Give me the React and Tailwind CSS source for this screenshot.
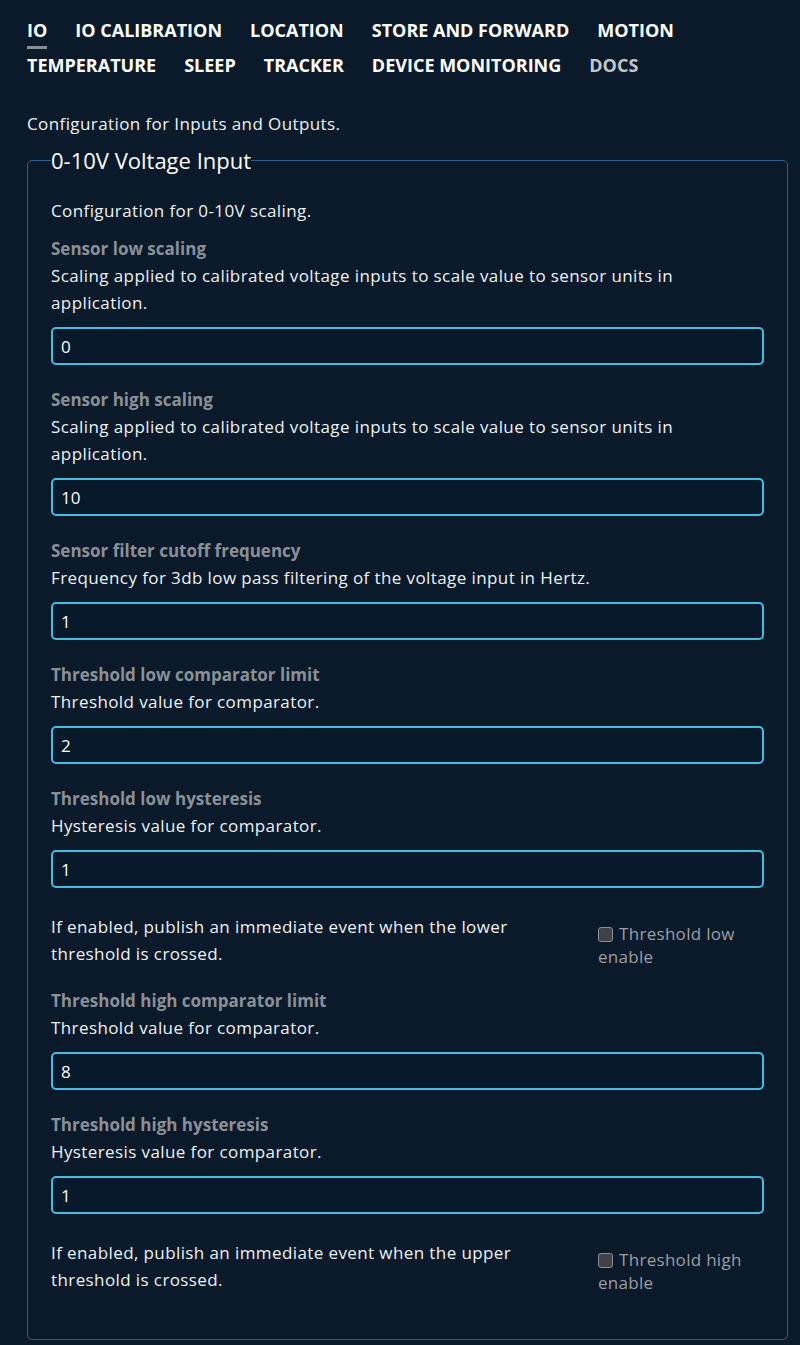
import React from 'react';

const tabs = [
  { name: 'IO', active: true },
  { name: 'IO CALIBRATION' },
  { name: 'LOCATION' },
  { name: 'STORE AND FORWARD' },
  { name: 'MOTION' },
  { name: 'TEMPERATURE' },
  { name: 'SLEEP' },
  { name: 'TRACKER' },
  { name: 'DEVICE MONITORING' },
  { name: 'DOCS', muted: true },
];

const scalingDesc = 'Scaling applied to calibrated voltage inputs to scale value to sensor units in application.';

function Field({ label, desc, value }) {
  return (
    <div className="mb-[20px]">
      <div className="pt-[2px] text-[17px] leading-[26px] font-bold text-[#8b9097]">{label}</div>
      <div className="text-[17px] leading-[27px] tracking-[0.4px] text-[#eef2f5]">{desc}</div>
      <input
        type="text"
        defaultValue={value}
        className="mt-[11px] w-full h-[38px] bg-[#07192a] border-2 border-[#45bde0] rounded-[5px] px-[8px] text-[17px] text-white outline-none"
      />
    </div>
  );
}

function CheckRow({ text, label, last }) {
  return (
    <div className={`grid grid-cols-[505px_1fr] gap-x-[42px] mt-[25px] ${last ? '' : 'mb-[18px]'}`}>
      <div className="text-[17px] leading-[27px] tracking-[0.4px] text-[#eef2f5]">{text}</div>
      <label className="pt-[9px] text-[17px] leading-[23px] tracking-[0.3px] text-[#9a9ea3]">
        <span className="inline-block align-[-2px] w-[15px] h-[15px] rounded-[3px] bg-[#3f4347] border border-[#8a8e93] mr-[6px]"></span>
        {label}
      </label>
    </div>
  );
}

export default function App() {
  return (
    <div className="min-h-[1345px] bg-[#0a1a2b] pl-[27px] pr-[12px] pt-[15px] pb-[6px]" style={{ fontFamily: '"Open Sans", "Liberation Sans", sans-serif' }}>
      {/* tabs */}
      <nav className="flex flex-wrap gap-x-[28px]">
        {tabs.map(t => (
          <div key={t.name} className="relative h-[35px] text-[18px] leading-[30px] font-bold">
            <span className={t.muted ? 'text-[#c4c7ca]' : 'text-white'}>{t.name}</span>
            {t.active && <span className="absolute left-0 right-0 top-[31px] h-[3px] bg-[#8a8d90]"></span>}
          </div>
        ))}
      </nav>

      <p className="mt-[25px] text-[17px] leading-[27px] tracking-[0.4px] text-[#eef2f5]">Configuration for Inputs and Outputs.</p>

      <fieldset className="mt-[9px] border border-[#2d5f8c] rounded-[5px] px-[23px] pb-[45px]">
        <legend className="text-[22px] leading-[28px] font-medium text-white">0-10V Voltage Input</legend>
        <p className="mt-[23px] mb-[10px] text-[17px] leading-[27px] tracking-[0.4px] text-[#eef2f5]">Configuration for 0-10V scaling.</p>

        <Field label="Sensor low scaling" desc={scalingDesc} value="0" />
        <Field label="Sensor high scaling" desc={scalingDesc} value="10" />
        <Field label="Sensor filter cutoff frequency" desc="Frequency for 3db low pass filtering of the voltage input in Hertz." value="1" />
        <Field label="Threshold low comparator limit" desc="Threshold value for comparator." value="2" />
        <Field label="Threshold low hysteresis" desc="Hysteresis value for comparator." value="1" />
        <CheckRow text="If enabled, publish an immediate event when the lower threshold is crossed." label="Threshold low enable" />
        <Field label="Threshold high comparator limit" desc="Threshold value for comparator." value="8" />
        <Field label="Threshold high hysteresis" desc="Hysteresis value for comparator." value="1" />
        <CheckRow text="If enabled, publish an immediate event when the upper threshold is crossed." label="Threshold high enable" last />
      </fieldset>
    </div>
  );
}
